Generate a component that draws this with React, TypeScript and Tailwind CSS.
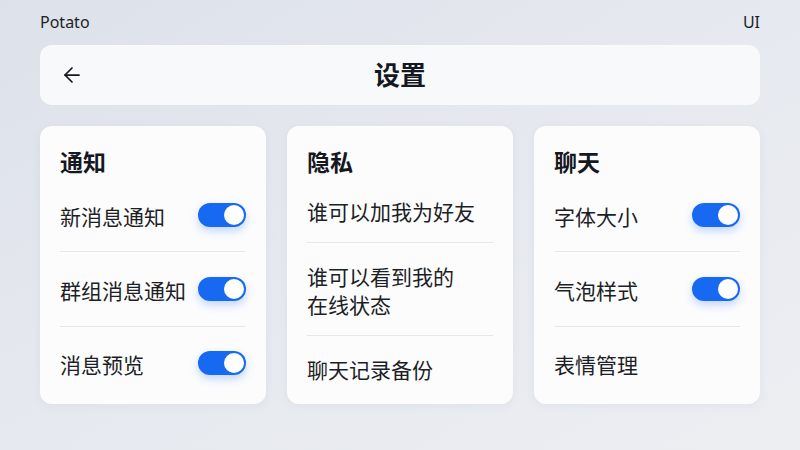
import React, { useState } from 'react';
import { ArrowLeft } from 'lucide-react';

const font = { fontFamily: '"Noto Sans", "Noto Sans CJK SC", sans-serif' };

type Item = { label: string; toggle?: boolean };

const Toggle: React.FC<{ on: boolean; onClick: () => void }> = ({ on, onClick }) => (
  <button
    onClick={onClick}
    className={`relative flex h-6 w-12 shrink-0 items-center rounded-full p-[2px] shadow-[0_4px_8px_rgba(23,105,242,0.25)] ${
      on ? 'justify-end bg-[#1769f2]' : 'justify-start bg-[#c9ced8]'
    }`}
  >
    <span className="h-5 w-5 rounded-full bg-white" />
  </button>
);

const SettingsCard: React.FC<{ title: string; items: Item[] }> = ({ title, items }) => {
  const [state, setState] = useState<boolean[]>(items.map(() => true));

  return (
    <div className="flex h-[278px] flex-col rounded-xl bg-[#fcfcfd] px-5 pt-5 pb-1 shadow-[0_2px_8px_rgba(120,130,150,0.08)]">
      <h2 className="h-8 text-[23px] font-bold leading-8 text-[#15181f]">{title}</h2>
      <div className="flex flex-1 flex-col">
        {items.map((item, i) => (
          <div
            key={item.label}
            className={`flex flex-1 items-center justify-between py-4 ${i < items.length - 1 ? 'border-b border-[#e4e7ee]' : ''}`}
          >
            <span className="whitespace-pre-line pt-1 text-[21px] leading-7 text-[#1c1f26]">{item.label}</span>
            {item.toggle && (
              <Toggle
                on={state[i]}
                onClick={() => setState((s) => s.map((v, j) => (j === i ? !v : v)))}
              />
            )}
          </div>
        ))}
      </div>
    </div>
  );
};

export default function App() {
  return (
    <div
      style={font}
      className="flex h-[450px] w-[800px] flex-col bg-gradient-to-br from-[#dde1ea] via-[#e6e9ef] to-[#eceef2] px-10"
    >
      <div className="flex h-[45px] items-center justify-between pb-[2px] text-[16px] text-[#1c1f26]">
        <span>Potato</span>
        <span>UI</span>
      </div>

      <div className="relative flex h-[60px] items-center rounded-xl bg-[#f8f9fa] px-5">
        <ArrowLeft size={24} strokeWidth={1.75} className="text-[#15181f]" />
        <h1 className="absolute left-1/2 -translate-x-1/2 text-[26px] font-bold text-[#15181f]">设置</h1>
      </div>

      <div className="mt-[21px] grid grid-cols-3 gap-[21px]">
        <SettingsCard
          title="通知"
          items={[
            { label: '新消息通知', toggle: true },
            { label: '群组消息通知', toggle: true },
            { label: '消息预览', toggle: true },
          ]}
        />
        <SettingsCard
          title="隐私"
          items={[
            { label: '谁可以加我为好友' },
            { label: '谁可以看到我的\n在线状态' },
            { label: '聊天记录备份' },
          ]}
        />
        <SettingsCard
          title="聊天"
          items={[
            { label: '字体大小', toggle: true },
            { label: '气泡样式', toggle: true },
            { label: '表情管理' },
          ]}
        />
      </div>
    </div>
  );
}
